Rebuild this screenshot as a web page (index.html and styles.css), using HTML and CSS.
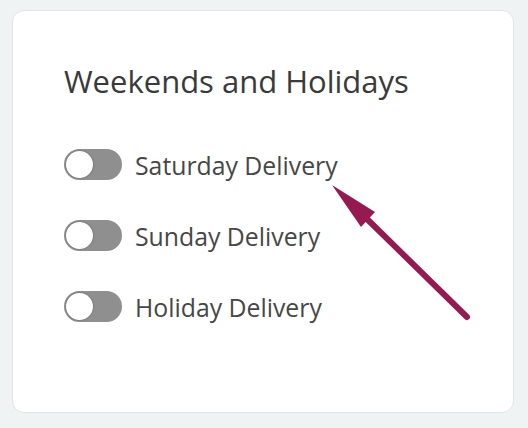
FILE: index.html
```html
<!DOCTYPE html>
<html>
<head>
<meta charset="utf-8">
<link rel="stylesheet" href="styles.css">
</head>
<body>
<div class="card">
  <h2 class="title">Weekends and Holidays</h2>
  <ul class="options">
    <li class="option"><span class="toggle"><span class="knob"></span></span><span class="label">Saturday Delivery</span></li>
    <li class="option"><span class="toggle"><span class="knob"></span></span><span class="label">Sunday Delivery</span></li>
    <li class="option"><span class="toggle"><span class="knob"></span></span><span class="label">Holiday Delivery</span></li>
  </ul>
  <svg class="arrow" width="528" height="428" viewBox="0 0 528 428">
    <line x1="467" y1="317" x2="366" y2="218" stroke="#961a52" stroke-width="6" stroke-linecap="round"/>
    <polygon points="332,185 375,212 361,227" fill="#961a52"/>
  </svg>
</div>
</body>
</html>
```
FILE: styles.css
```css
html, body {
  margin: 0;
  padding: 0;
  background: #f0f3f4;
}
body {
  padding: 10px 14px 15px 12px;
  font-family: "Open Sans", "Liberation Sans", sans-serif;
}
.card {
  position: relative;
  box-sizing: border-box;
  width: 502px;
  height: 403px;
  background: #ffffff;
  border: 1px solid #e2e5e7;
  border-radius: 12px;
  padding: 52px 51px 0 51px;
}
.title {
  margin: 0 0 50px 0;
  font-size: 31px;
  line-height: 36px;
  font-weight: 400;
  color: #3a3a3a;
}
.options {
  list-style: none;
  margin: 0;
  padding: 0;
  display: flex;
  flex-direction: column;
  gap: 40px;
}
.option {
  display: flex;
  align-items: center;
  gap: 13px;
  height: 31px;
}
.toggle {
  box-sizing: border-box;
  width: 58px;
  height: 31px;
  border-radius: 16px;
  background: #8f8f8f;
  padding: 2px;
  display: flex;
  align-items: center;
}
.knob {
  width: 27px;
  height: 27px;
  border-radius: 50%;
  background: #ffffff;
  box-shadow: 0 0 2px rgba(0,0,0,0.35);
}
.label {
  font-size: 24.8px;
  color: #474747;
}
.arrow {
  position: absolute;
  left: -13px;
  top: -11px;
  pointer-events: none;
}
```
